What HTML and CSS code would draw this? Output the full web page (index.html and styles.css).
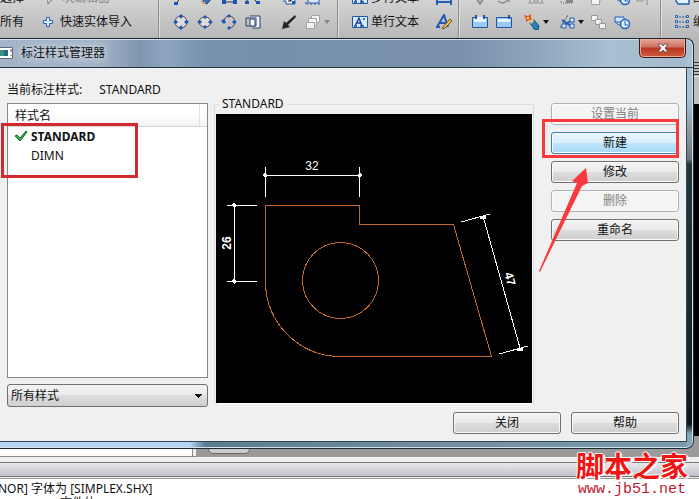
FILE: index.html
```
<!DOCTYPE html>
<html lang="zh-CN">
<head>
    <meta charset="UTF-8">
    <title>标注样式管理器</title>
    <link rel="stylesheet" href="styles.css">
</head>
<body>
    <svg class="defs" width="0" height="0" aria-hidden="true">
        <defs>
            <symbol id="caret" viewBox="0 0 6 4"><path d="M0 0h6L3 4z" fill="currentColor"/></symbol>
            <symbol id="plus" viewBox="0 0 12 12"><path d="M4.500 1.500h3v3h3v3h-3v3h-3v-3h-3v-3h3z" fill="#dcebff" stroke="#2f62b5"/></symbol>
            <symbol id="cursor" viewBox="0 0 16 16"><path d="M5 1l1 13 3-4 5-1z" fill="#eee" stroke="#777"/></symbol>
            <symbol id="line" viewBox="0 0 16 16"><path d="M3 13L13 3" stroke="#333"/><path d="M1 12h4v3H1z" fill="#1d56b8"/></symbol>
            <symbol id="brush" viewBox="0 0 16 16"><path d="M3 5q1 8 6 9" fill="none" stroke="#444" stroke-dasharray="2 1"/><path d="M6 11l6-6 3 3-5 6z" fill="#2f6fd0" stroke="#1b3f80"/><path d="M5 14l2-3 2 3z" fill="#f39a3a"/></symbol>
            <symbol id="poly" viewBox="0 0 16 16"><path d="M3 12h11L11 3H6z" fill="none" stroke="#333"/><path d="M1 10h4v4H1zM12 10h4v4h-4z" fill="#1d56b8"/></symbol>
            <symbol id="spline" viewBox="0 0 16 16"><path d="M1 13Q5 1 12 13" fill="none" stroke="#333"/><path d="M0 11h4v3H0zM11 11h4v3h-4z" fill="#1d56b8"/></symbol>
            <symbol id="circle" viewBox="0 0 16 16"><circle cx="8" cy="8" r="6" fill="#dedede" stroke="#444"/><path d="M8 0l2 2-2 3-2-3zM8 11l2 3-2 2-2-2zM0 8l3-2 2 2-2 2zM11 8l2-2 3 2-3 2z" fill="#1d56b8"/></symbol>
            <symbol id="ellipse" viewBox="0 0 16 16"><ellipse cx="8" cy="8" rx="6" ry="5" fill="#dedede" stroke="#444"/><path d="M8 1l2 2-2 2-2-2zM8 11l2 2-2 2-2-2zM0 8l3-2 2 2-2 2zM11 8l2-2 3 2-3 2z" fill="#1d56b8"/></symbol>
            <symbol id="arc" viewBox="0 0 16 16"><path d="M3 7Q4 2 8 2a6 6 0 1 1 0 12" fill="none" stroke="#444"/><path d="M8 0l2 2-2 2-2-2zM8 12l2 2-2 2-2-2zM0 7l3-2 2 3-2 2zM11 8l2-2 3 2-3 2z" fill="#1d56b8"/></symbol>
            <symbol id="block" viewBox="0 0 16 16"><path d="M5 2h10v12H7" fill="#eef4ff" stroke="#2b3f66"/><path d="M1 4h10v8H1z" fill="none" stroke="#2b3f66"/><path d="M5 5h4l1 2v5H5z" fill="#fff" stroke="#2b3f66"/></symbol>
            <symbol id="insert" viewBox="0 0 16 16"><path d="M3 5h11v9H5v-3H2" fill="#eef4ff" stroke="#2452a0"/><path d="M6 7l4 4M10 8v3H7" fill="none" stroke="#111"/><path d="M11 11h3v3h-3z" fill="#1d56b8"/></symbol>
            <symbol id="stroke" viewBox="0 0 16 16"><path d="M1 15l2-8 2 2 9-8 1 2-8 8 2 2z" fill="#25251f"/></symbol>
            <symbol id="region" viewBox="0 0 16 16"><path d="M3 5h11v8H3z" fill="#dbe8fa" stroke="#2452a0"/><path d="M1 14h15M1 4v11" stroke="#2452a0" stroke-dasharray="2 2"/></symbol>
            <symbol id="copies" viewBox="0 0 16 16"><g fill="#f4f4f4" stroke="#a3a3a3"><path d="M6.500 1.500h8v7h-8z"/><path d="M3.500 4.500h8v7h-8z"/><path d="M1.500 8.500h8v6h-8z"/></g></symbol>
            <symbol id="textbox" viewBox="0 0 16 16"><path d="M.5 2.500h15v11H.5z" fill="#d9eaff" stroke="#2358a8"/><path d="M3 12l4-8 3 8M4 9h5M2 12h3M8 12h4M11 5h2" fill="none" stroke="#174a9b" stroke-width="1.500"/></symbol>
            <symbol id="dimline" viewBox="0 0 16 16"><path d="M1 9v6M15 9v6M1 12h14" stroke="#245fb5" stroke-width="2"/></symbol>
            <symbol id="textedit" viewBox="0 0 16 16"><path d="M1 13L8 1l4 12M4 9h6M0 13h4" fill="none" stroke="#2358b8" stroke-width="2"/><path d="M7 13l7-8 2 2-7 7-3 1z" fill="#f0c14c" stroke="#765015"/></symbol>
            <symbol id="trim" viewBox="0 0 16 16"><path d="M.5 3.500h15v10H.5z" fill="#9ccaf8" stroke="#2458a4"/><path d="M2 5h3V3h6v2h3v3H2z" fill="#e6f3ff"/><path d="M3 1h2v4H3zM11 1h2v4h-2z" fill="#2458a4"/></symbol>
            <symbol id="extend" viewBox="0 0 16 16"><path d="M.5 3.500h15v10H.5z" fill="#9ccaf8" stroke="#2458a4"/><path d="M2 5h12v3H2z" fill="#e6f3ff"/><path d="M12 1h2v4h-2z" fill="#2458a4"/></symbol>
            <symbol id="explode" viewBox="0 0 16 16"><path d="M0 1l4 1 3-2v4l2 3-4-1-3 2V5z" fill="#e35320"/><path d="M3 3h2v2H3z" fill="#ffe36d"/><path d="M7 7l3-1 5 6-1 4-4-1-4-6z" fill="#2881bd" stroke="#174c77"/><path d="M5 7l3-2 2 2-3 3z" fill="#efc469"/></symbol>
            <symbol id="cut" viewBox="0 0 16 16"><path d="M1 14L9 1" stroke="#555" stroke-dasharray="3 1"/><path d="M3 6l9 6M4 12l9-6" stroke="#245fb5" stroke-width="2"/><path d="M11 4h4v4h-4zM11 10h4v4h-4zM3 10h4v4H3z" fill="#dce8fa" stroke="#245fb5"/></symbol>
            <symbol id="array" viewBox="0 0 16 16"><g fill="#f3f3f3" stroke="#999"><path d="M1.500 1.500h6v5h-6z"/><path d="M5.500 5.500h6v5h-6z"/><path d="M9.500 9.500h6v5h-6z"/></g></symbol>
            <symbol id="measure" viewBox="0 0 16 16"><path d="M1 3h9v5H1zM1 8l4 3h5" fill="#cfe4ff" stroke="#245fb5"/><circle cx="11" cy="10" r="4.500" fill="#d9edff" stroke="#245fb5" stroke-width="1.500"/><path d="M11 7v4h3" fill="none" stroke="#245fb5"/></symbol>
            <symbol id="move" viewBox="0 0 16 16"><path d="M8 0v11M2 7h12M5 10l3 4 3-4" fill="none" stroke="#858585" stroke-width="1.500"/></symbol>
            <symbol id="rotate" viewBox="0 0 16 16"><path d="M2 11q6 5 11-3M13 8l-4 1M13 8v4" fill="none" stroke="#8a8a8a" stroke-width="1.500"/></symbol>
            <symbol id="mirror" viewBox="0 0 16 16"><path d="M1 13l5-9v9zM15 13l-5-9v9zM8 1v13" fill="#ddd" stroke="#8a8a8a"/></symbol>
            <symbol id="hatch" viewBox="0 0 16 16"><path d="M7 3h7v10H7z" fill="#888"/><path d="M2 3v10h11" fill="none" stroke="#666" stroke-dasharray="1 1"/></symbol>
            <symbol id="align" viewBox="0 0 16 16"><path d="M3 4h6v7H3zM13 2v13" fill="#eee" stroke="#888"/></symbol>
            <symbol id="layer" viewBox="0 0 16 16"><path d="M4 2h11v3H4zM2 6h13v8H4l-2-3z" fill="#e7f2ff" stroke="#2362ab" stroke-width="1.500"/></symbol>
            <symbol id="rows" viewBox="0 0 16 16"><path d="M2 3h12M2 8h12M2 13h12" stroke="#26579c" stroke-dasharray="2 1"/><path d="M1.500 1.500h2v2h-2zM12.500 1.500h2v2h-2zM1.500 6.500h2v2h-2zM12.500 6.500h2v2h-2zM1.500 11.500h2v2h-2zM12.500 11.500h2v2h-2z" fill="#cfe2fa" stroke="#245fb5"/></symbol>
        </defs>
    </svg>

    <div class="app">
        <div class="ribbon">
            <div class="panel panel-block">
                <div class="row"><span class="cut-text">选择</span><span class="tool muted"><svg><use href="#cursor"/></svg>块编辑器</span></div>
                <div class="row"><span class="cut-text">所有</span><span class="tool"><svg class="small"><use href="#plus"/></svg>快速实体导入</span></div>
            </div>
            <div class="panel panel-draw">
                <svg><use href="#line"/></svg>
                <svg><use href="#brush"/></svg>
                <svg><use href="#poly"/></svg>
                <svg><use href="#spline"/></svg>
                <svg class="wide"><use href="#insert"/></svg>
                <span class="drop muted"><svg><use href="#region"/></svg><svg class="caret"><use href="#caret"/></svg></span>
                <svg><use href="#circle"/></svg>
                <svg><use href="#ellipse"/></svg>
                <svg><use href="#arc"/></svg>
                <svg><use href="#block"/></svg>
                <svg class="wide"><use href="#stroke"/></svg>
                <span class="drop muted"><svg><use href="#copies"/></svg><svg class="caret"><use href="#caret"/></svg></span>
            </div>
            <div class="panel panel-text">
                <div class="row"><svg><use href="#textbox"/></svg><span>多行文本</span><svg class="last"><use href="#dimline"/></svg></div>
                <div class="row"><svg><use href="#textbox"/></svg><span>单行文本</span><svg class="last"><use href="#textedit"/></svg></div>
            </div>
            <div class="panel panel-modify">
                <svg><use href="#move"/></svg>
                <svg><use href="#rotate"/></svg>
                <span class="drop"><svg><use href="#mirror"/></svg></span>
                <span class="drop muted"><svg><use href="#hatch"/></svg><svg class="caret"><use href="#caret"/></svg></span>
                <svg><use href="#copies"/></svg>
                <svg><use href="#measure"/></svg>
                <svg><use href="#align"/></svg>
                <svg><use href="#trim"/></svg>
                <svg><use href="#extend"/></svg>
                <span class="drop"><svg><use href="#explode"/></svg><svg class="caret"><use href="#caret"/></svg></span>
                <span class="drop"><svg><use href="#cut"/></svg><svg class="caret"><use href="#caret"/></svg></span>
                <svg><use href="#array"/></svg>
                <svg><use href="#measure"/></svg>
            </div>
            <div class="panel panel-layer">
                <div class="row"><svg><use href="#layer"/></svg><span>图</span></div>
                <div class="row"><svg><use href="#rows"/></svg><span>编</span></div>
            </div>
        </div>
        <div class="ribbon-foot"></div>
        <div class="canvas"></div>
        <div class="tabs"><div class="pane"></div><div class="tab"></div></div>
        <div class="splitter"></div>
        <div class="command">
            <p>NOR] 字体为 [SIMPLEX.SHX]</p>
            <p class="next">文件体</p>
        </div>
    </div>

    <div class="dialog" role="dialog" aria-labelledby="dialog-title">
        <div class="titlebar">
            <svg class="app-icon" viewBox="0 0 13 12"><path d="M0 0h13v12H0z" fill="#fff"/><path d="M0 .5h12.500v11H0" fill="none" stroke="#667"/><path d="M0 3h8v6H0z" fill="#3d8f86"/><path d="M4 3h4v6H4z" fill="#266b86"/><path d="M11 2v3M11 8v1" stroke="#444"/></svg>
            <span id="dialog-title" class="title">标注样式管理器</span>
            <button class="close" aria-label="关闭窗口">
                <svg viewBox="0 0 12 10"><path d="M1 1h3l2 2 2-2h3L8 5l3 4H8L6 7 4 9H1l3-4z" fill="#fff" stroke="#5b4040" stroke-width=".8"/></svg>
            </button>
        </div>
        <div class="client">
            <div class="columns">
                <div class="styles">
                    <div class="current"><span>当前标注样式:</span><span>STANDARD</span></div>
                    <div class="list">
                        <table>
                            <thead>
                                <tr><th>样式名</th></tr>
                            </thead>
                            <tbody>
                                <tr class="active"><td><svg viewBox="0 0 14 12"><path d="M1 6l2-1 3 3 6-7 1 1-7 9z" fill="#35b44a" stroke="#0c6b22"/></svg>STANDARD</td></tr>
                                <tr><td>DIMN</td></tr>
                            </tbody>
                        </table>
                        <div class="mark mark-list"></div>
                    </div>
                    <select aria-label="列出">
                        <option>所有样式</option>
                    </select>
                </div>
                <fieldset class="preview">
                    <legend>STANDARD</legend>
                    <svg viewBox="0 0 316 289">
                        <g class="shape">
                            <path d="M49.500 167.500v-76h94v19h94l38 132h-151a75 75 0 0 1-75-75z"/>
                            <circle cx="124.500" cy="166.500" r="38"/>
                        </g>
                        <g class="dim">
                            <path d="M49.500 53v30M143.500 53v30M49.500 61.500h94"/>
                            <path d="M11 91.500h30M11 167.500h30M18.500 91.500v76"/>
                            <path d="M245 108l29-8M283 240l29-8M267 102l37 132"/>
                        </g>
                        <g class="tick">
                            <path d="M48 60l3 3M142 63l3-3M17 90l3 3M17 166l3 3M264 103h6M301 235h6"/>
                        </g>
                        <g class="num">
                            <text x="96" y="56">32</text>
                            <text class="heavy" transform="translate(15 129) rotate(-90)">26</text>
                            <text class="heavy" transform="translate(290 166) rotate(74)">47</text>
                        </g>
                    </svg>
                </fieldset>
                <div class="actions">
                    <button disabled>设置当前</button>
                    <button class="hot">新建</button>
                    <button>修改</button>
                    <button disabled>删除</button>
                    <button>重命名</button>
                    <div class="mark mark-new"></div>
                    <svg class="arrow" viewBox="0 0 50 104"><path d="M47 0L33 13l5 2L0 103l1 1L43 18l6-3z"/></svg>
                </div>
            </div>
            <div class="bottom">
                <button>关闭</button>
                <button>帮助</button>
            </div>
        </div>
    </div>

    <div class="watermark">
        <strong>脚本之家</strong>
        <span>www.jb51.net</span>
    </div>
</body>
</html>
```

FILE: styles.css
```
* {
    margin: 0;
    padding: 0;
    box-sizing: border-box;
}
body {
    height: 100vh;
    overflow: hidden;
    position: relative;
    font-family: "Noto Sans", "Noto Sans CJK SC", sans-serif;
    font-size: 12px;
    line-height: 18px;
    color: #111;
    background: #fff;
}
svg {
    display: block;
    flex: none;
}
.defs {
    position: absolute;
}

/* application behind the dialog */
.app {
    display: flex;
    flex-direction: column;
    height: 100%;
}
.ribbon {
    display: flex;
    height: 62px;
    overflow: hidden;
    background: linear-gradient(#d3d3d3, #b8b8b8 38px, #b4b4b4);
}
.panel {
    flex: none;
    height: 76px;
    margin-top: -14px;
    border-right: 1px solid #8e8e8e;
    box-shadow: 1px 0 #dedede;
}
.panel svg {
    width: 16px;
    height: 16px;
}
.row {
    display: flex;
    align-items: center;
    height: 24px;
    white-space: nowrap;
}
.muted {
    color: #858585;
}
.tool {
    display: flex;
    align-items: center;
    gap: 4px;
}
.panel svg.small {
    width: 12px;
    height: 12px;
    margin-right: 2px;
}
.panel-block {
    width: 159px;
}
.cut-text {
    width: 42px;
}
.panel-draw,
.panel-modify {
    display: grid;
    grid-auto-rows: 24px;
    align-items: center;
    justify-items: center;
}
.panel-draw {
    width: 179px;
    padding-left: 10px;
    grid-template-columns: 24px 24px 24px 24px 36px 32px;
}
.panel-draw .wide {
    margin-left: 12px;
}
.drop {
    display: flex;
    align-items: center;
    gap: 3px;
}
.panel svg.caret {
    width: 6px;
    height: 4px;
}
.panel-text {
    width: 121px;
    padding-left: 14px;
}
.panel-text span {
    padding-left: 3px;
}
.panel-text .last {
    margin-left: 17px;
}
.panel-modify {
    width: 202px;
    padding-left: 9px;
    grid-template-columns: 24px 24px 40px 30px 24px 24px 15px;
}
.panel-layer {
    flex: 1;
    min-width: 0;
    padding-left: 13px;
    border: 0;
}
.panel-layer span {
    padding-left: 3px;
}
.ribbon-foot {
    height: 42px;
    background: linear-gradient(transparent 14px, #e2e2e2 14px, #e2e2e2 15px, #c0c0c0 15px), repeating-linear-gradient(#333 0 1px, #bcbcbc 1px 3px);
}
.canvas {
    flex: 1;
    background: #000;
}
.tabs {
    display: flex;
    height: 21px;
    background: #9a9a9a;
}
.pane {
    width: 196px;
    background: linear-gradient(90deg, #fff 192px, #888 192px, #888 193px, #efefef 193px);
    border-bottom: 1px solid #888;
}
.tab {
    width: 42px;
    height: 18px;
    margin-left: 12px;
    background: #ccc;
    border: 1px solid #666;
    border-radius: 0 0 5px 5px;
}
.splitter {
    height: 22px;
    border-top: 5px solid #efefef;
    background: linear-gradient(#777 1px, #e9e9ec 1px, #c1c2c9 14px, #777 14px, #777 15px, #eee 15px, #eee 16px, #999 16px);
}
.command {
    height: 20px;
    padding-top: 3px;
    overflow: hidden;
    white-space: nowrap;
    line-height: 14px;
    background: #fff;
}
.command p {
    margin-left: -2px;
}
.command .next {
    margin-left: 60px;
}

/* dialog */
.dialog {
    position: absolute;
    top: 38px;
    left: 0;
    right: 5px;
    display: flex;
    flex-direction: column;
    padding: 0 6px 6px 0;
    border: 1px solid #1d2a35;
    border-left: 0;
    border-radius: 0 8px 8px 0;
    box-shadow: inset -1px 1px #d3e0ea, inset 0 -1px #d3e0ea;
    background:
        linear-gradient(#a9bfd2 60px, #8e9ca6 90px, #6c7880 120px, #24363d 125px, #14242b 330px, #0d171c 385px, #87a5ba 395px) right top / 7px 100% no-repeat,
        linear-gradient(90deg, #b4d5f5 190px, #5c7b91 205px, #6f8ca1 60%, #7d9bb0) left bottom / 100% 7px no-repeat,
        linear-gradient(90deg, #a4b3c8, #a2b2c6 100px, #7f96b1 140px, #8ca4bf 165px, #7690ad 210px, #7890ab 460px, #8ba4bb 530px, #a9c0d2 610px, #a3b9cc);
}
.titlebar {
    display: flex;
    align-items: center;
    height: 29px;
    margin-right: -6px;
    border-bottom: 1px solid #26323e;
}
.app-icon {
    width: 13px;
    height: 12px;
}
.title {
    flex: 1;
    padding-left: 8px;
    text-shadow: 0 0 6px #dce5ee, 0 0 10px #dce5ee;
}
.close {
    display: flex;
    justify-content: center;
    align-items: center;
    align-self: flex-start;
    width: 47px;
    height: 19px;
    margin-right: 7px;
    border: 1px solid #3d1a1c;
    border-top: 0;
    border-radius: 0 0 5px 5px;
    box-shadow: inset 0 0 0 1px #eba897;
    background: linear-gradient(#e4a59b, #d0705f 8px, #b93520 9px, #cf5d3e);
}
.close svg {
    width: 12px;
    height: 10px;
}
.client {
    padding: 13px 7px 7px;
    background: #f0f0f0;
    border: solid #344653;
    border-width: 0 1px 1px 0;
}
.columns {
    display: grid;
    grid-template-columns: 201px 1fr 128px;
}
.styles {
    display: flex;
    flex-direction: column;
}
.current {
    display: flex;
    gap: 17px;
    height: 22px;
}
.list {
    position: relative;
    height: 275px;
    border: 1px solid #828790;
    background: #fff;
}
.list table {
    width: 100%;
    border-collapse: collapse;
}
.list th {
    height: 22px;
    padding: 2px 7px 0;
    text-align: left;
    font-weight: normal;
    border-bottom: 1px solid #d5d5d5;
    background: linear-gradient(90deg, transparent 191px, #dfe1e4 191px, #dfe1e4 192px, transparent 192px), linear-gradient(#fff 10px, #f1f2f4);
}
.list td {
    height: 19px;
    padding-left: 23px;
    line-height: 19px;
    vertical-align: top;
}
.list td svg {
    float: left;
    width: 14px;
    height: 12px;
    margin: 3px 3px 0 -17px;
}
.active td {
    font-weight: bold;
}
.mark {
    position: absolute;
    border: 3px solid #d4282f;
    pointer-events: none;
}
.mark-list {
    left: -7px;
    top: 19px;
    width: 137px;
    height: 55px;
}
select {
    appearance: none;
    height: 23px;
    margin-top: 6px;
    padding: 0 3px;
    font: inherit;
    color: #111;
    border: 1px solid #707070;
    border-radius: 3px;
    background:
        linear-gradient(to bottom right, #000 50%, transparent 50%) right 4px top 9px / 4px 4px no-repeat,
        linear-gradient(to bottom left, #000 50%, transparent 50%) right 8px top 9px / 4px 4px no-repeat,
        linear-gradient(#f2f2f2, #ebebeb 50%, #dddddd 50%, #cfcfcf);
}
.preview {
    min-width: 0;
    align-self: start;
    margin: 14px 17px 0 6px;
    padding: 1px 1px 0;
    border: 1px solid #dcdcdc;
}
.preview legend {
    margin-left: 3px;
    padding: 0 3px;
}
.preview svg {
    width: 100%;
    height: auto;
    background: #000;
    box-shadow: 1px 1px #fff;
}
.shape,
.dim,
.tick {
    fill: none;
    shape-rendering: crispEdges;
}
.shape {
    stroke: #c0692a;
}
.dim {
    stroke: #fff;
}
.tick {
    stroke: #fff;
    stroke-width: 3px;
}
.num {
    fill: #fff;
    font-family: "Liberation Sans", sans-serif;
    font-size: 12px;
    text-anchor: middle;
}
.heavy {
    font-weight: bold;
}
.actions {
    position: relative;
    display: flex;
    flex-direction: column;
    gap: 7px;
    padding-top: 22px;
}
.actions button,
.bottom button {
    height: 22px;
    font: inherit;
    color: #111;
    border: 1px solid #707070;
    border-radius: 3px;
    box-shadow: inset 0 0 0 1px #fafafa;
    background: linear-gradient(#f2f2f2, #ebebeb 50%, #dddddd 50%, #cfcfcf);
}
.actions button:disabled {
    color: #838383;
    border-color: #adb2b5;
    background: #f4f4f4;
}
.actions .hot {
    border-color: #3c7fb1;
    background: linear-gradient(#eaf6fd, #d9f0fc 50%, #bee6fd 50%, #a7d9f5);
}
.mark-new {
    left: -9px;
    right: 0;
    top: 38px;
    height: 39px;
    border-color: #f9393d;
}
.arrow {
    position: absolute;
    left: -12px;
    top: 87px;
    width: 50px;
    height: 104px;
    fill: #f9393d;
}
.bottom {
    display: flex;
    justify-content: flex-end;
    gap: 10px;
    margin-top: 5px;
}
.bottom button {
    width: 108px;
}

.watermark {
    position: absolute;
    right: 11px;
    bottom: 2px;
    display: flex;
    flex-direction: column;
    align-items: center;
}
.watermark strong {
    font-family: "Noto Sans CJK SC", sans-serif;
    font-size: 28px;
    line-height: 36px;
    color: #f01414;
    text-shadow: 1px 0 #fff, -1px 0 #fff, 0 1px #fff, 0 -1px #fff, 2px 1px #fff;
}
.watermark span {
    font-family: "Liberation Mono", monospace;
    font-size: 15px;
    line-height: 14px;
    color: #c01830;
}
```
